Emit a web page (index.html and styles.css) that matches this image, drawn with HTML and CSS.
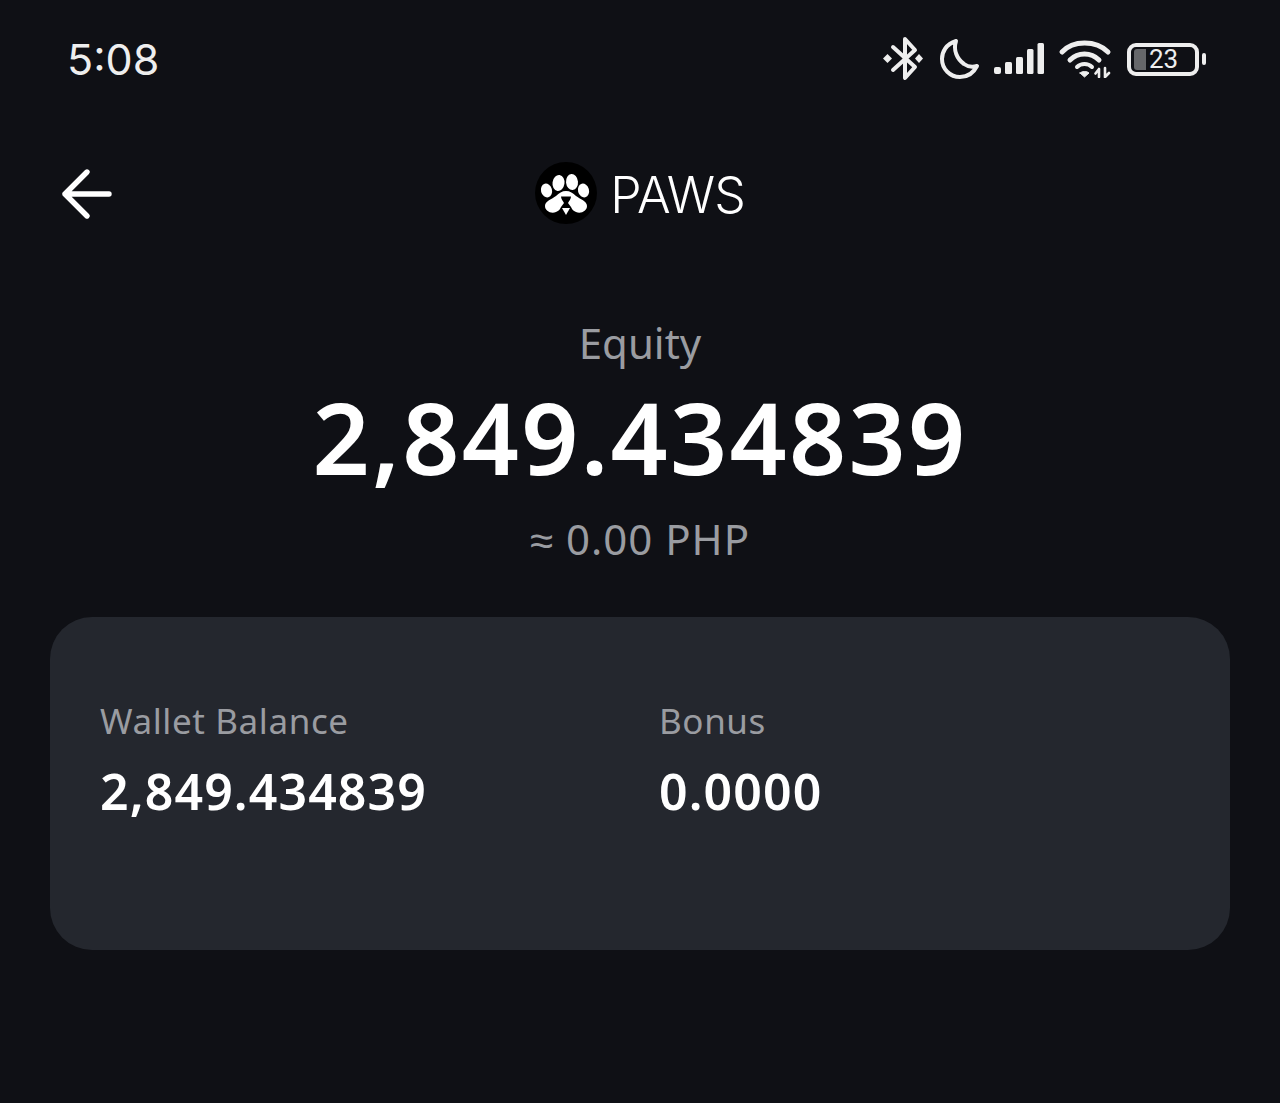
FILE: index.html
```html
<!doctype html>
<html>
<head>
<meta charset="utf-8">
<link rel="stylesheet" href="styles.css">
</head>
<body>
<div class="status-bar">
  <span class="clock">5:08</span>
  <div class="status-icons">
    <svg class="ic-bt" width="40" height="46" viewBox="0 0 40 46" fill="none" stroke="#eee" stroke-width="4" stroke-linecap="round" stroke-linejoin="round">
      <path d="M10 11 L32 31 L22 42 V3 L32 14 L10 34"/>
      <path d="M4.5 18 L9 22.5 L4.5 27 L0 22.5 Z" fill="#eee" stroke="none"/>
      <path d="M36 18 L40 22.5 L36 27 L32 22.5 Z" fill="#eee" stroke="none"/>
    </svg>
    <svg class="ic-moon" width="40" height="42" viewBox="0 0 40 42" fill="none" stroke="#eee" stroke-width="4" stroke-linejoin="round">
      <path d="M16 3 C6 6 2 14 2 21 C2 31 10 39 20 39 C28 39 34 34 37 28 C33 29 28 29 24 26 C17 21 13 12 16 3 Z"/>
    </svg>
    <svg class="ic-signal" width="50" height="32" viewBox="0 0 50 32" fill="#eee">
      <rect x="0" y="24" width="7" height="7" rx="2"/>
      <rect x="11" y="19" width="7" height="12" rx="1.5"/>
      <rect x="22" y="14" width="7" height="17" rx="1.5"/>
      <rect x="33" y="6" width="6.5" height="25" rx="1.5"/>
      <rect x="43.5" y="0" width="6.5" height="31" rx="1.5"/>
    </svg>
    <svg class="ic-wifi" width="54" height="38" viewBox="0 0 54 38" fill="none" stroke="#eee" stroke-width="5" stroke-linecap="round">
      <path d="M4 12 C15 0 38 0 50 12"/>
      <path d="M12 20 C20 12 33 12 41 20"/>
      <path d="M19 27 C23 23 30 23 34 27" stroke-width="4"/>
      <path d="M22 33 L26.5 37 L31 33 C29 31 24 31 22 33 Z" fill="#eee" stroke-width="1"/>
      <path d="M41 29 V37 M37.5 33.5 L41 29 M47 28 V37 M47 37 L51 33" stroke-width="2.6"/>
    </svg>
    <div class="battery">
      <div class="battery-body">
        <span class="battery-fill"></span>
        <span class="battery-num">23</span>
      </div>
      <span class="battery-cap"></span>
    </div>
  </div>
</div>

<div class="nav">
  <svg class="back" width="52" height="52" viewBox="0 0 52 52" fill="none" stroke="#fff" stroke-width="5.4" stroke-linecap="round" stroke-linejoin="round">
    <path d="M26 4 L4 26 L26 48 M4 26 H48"/>
  </svg>
  <div class="coin">
    <svg width="62" height="62" viewBox="0 0 62 62">
      <circle cx="31" cy="31" r="31" fill="#000"/>
      <g fill="#fff">
        <ellipse cx="11.5" cy="28.5" rx="5.5" ry="7" transform="rotate(-15 11.5 28.5)"/>
        <ellipse cx="23.5" cy="21" rx="6" ry="8" transform="rotate(8 23.5 21)"/>
        <ellipse cx="37" cy="20" rx="6" ry="8" transform="rotate(-5 37 20)"/>
        <ellipse cx="48.5" cy="28.5" rx="5.5" ry="7" transform="rotate(-15 48.5 28.5)"/>
        <path d="M31 29 C35 29 38 31 41 34 C45 37 52 39 52 44 C52 49 46 52 41 50 C38 49 37 47 36 45 L33 41 C34 39 36 37 36 34.5 H26 C26 37 28 39 29 41 L26 45 C25 47 24 49 21 50 C16 52 10 49 10 44 C10 39 17 37 21 34 C24 31 27 29 31 29 Z"/>
        <path d="M27 46 H35 L31 53 Z"/>
      </g>
    </svg>
  </div>
  <span class="coin-name">PAWS</span>
</div>

<div class="summary">
  <div class="equity-label">Equity</div>
  <div class="equity-value">2,849.434839</div>
  <div class="equity-fiat">≈ 0.00 PHP</div>
</div>

<div class="card">
  <div class="card-col">
    <div class="card-label">Wallet Balance</div>
    <div class="card-value">2,849.434839</div>
  </div>
  <div class="card-col">
    <div class="card-label">Bonus</div>
    <div class="card-value">0.0000</div>
  </div>
</div>
</body>
</html>
```

FILE: styles.css
```css
html, body {
  margin: 0;
  height: 100%;
}
body {
  background-color: #0f1015;
  color: #fff;
  font-family: "Noto Sans", "Liberation Sans", sans-serif;
  overflow: hidden;
}

.status-bar {
  display: flex;
  justify-content: space-between;
  align-items: center;
  height: 46px;
  padding: 36px 74px 0 67px;
}
.clock {
  font-family: Inter, sans-serif;
  font-size: 43px;
  font-weight: 400;
  color: #eee;
}
.status-icons {
  display: flex;
  align-items: center;
}
.ic-moon { margin-left: 17px; }
.ic-signal { margin-left: 14px; }
.ic-wifi { margin-left: 14px; }
.battery {
  display: flex;
  align-items: center;
  gap: 3px;
  margin-left: 15px;
}
.battery-body {
  display: flex;
  align-items: center;
  box-sizing: border-box;
  width: 72px;
  height: 33px;
  border: 4px solid #eee;
  border-radius: 9px;
  padding: 2px 3px;
}
.battery-fill {
  width: 12px;
  height: 100%;
  background-color: #66676a;
  border-radius: 3px 0 0 3px;
}
.battery-num {
  font-family: Roboto, sans-serif;
  font-size: 26px;
  margin-left: 3px;
  color: #eee;
}
.battery-cap {
  width: 4px;
  height: 12px;
  background-color: #eee;
  border-radius: 2px;
}

.nav {
  position: relative;
  display: flex;
  justify-content: center;
  align-items: center;
  gap: 13px;
  height: 62px;
  margin-top: 80px;
}
.back {
  position: absolute;
  left: 61px;
  top: 6px;
}
.coin {
  height: 62px;
}
.coin-name {
  font-family: Inter, sans-serif;
  font-size: 50px;
  font-weight: 300;
  letter-spacing: -1px;
  padding-top: 4px;
}

.summary {
  text-align: center;
  margin-top: 87px;
}
.equity-label {
  font-size: 42px;
  line-height: 64px;
  color: #9a9ca1;
}
.equity-value {
  font-size: 100px;
  line-height: 122px;
  font-weight: 600;
  letter-spacing: 2.3px;
}
.equity-fiat {
  font-size: 42px;
  line-height: 64px;
  letter-spacing: 1px;
  color: #9a9ca1;
  margin-top: 10px;
}

.card {
  display: grid;
  grid-template-columns: 559px 1fr;
  box-sizing: border-box;
  height: 333px;
  margin: 46px 50px 0;
  padding: 80px 50px 0;
  background-color: #24272e;
  border-radius: 42px;
}
.card-label {
  font-size: 35px;
  line-height: 48px;
  letter-spacing: 0.6px;
  color: #9a9ca1;
}
.card-value {
  font-size: 50px;
  line-height: 66px;
  font-weight: 600;
  letter-spacing: 1.1px;
  margin-top: 13px;
}
```
